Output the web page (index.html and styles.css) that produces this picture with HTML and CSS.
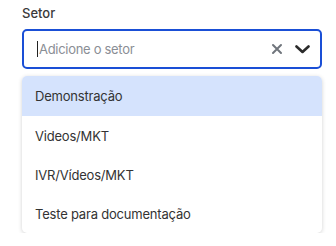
FILE: index.html
```html
<!DOCTYPE html>
<html lang="pt">
<head>
  <meta charset="UTF-8" />
  <title>Setor</title>
  <link rel="stylesheet" href="styles.css">
</head>
<body>
  <div class="field">
    <label class="label">Setor</label>
    <div class="select">
      <span class="caret"></span>
      <span class="placeholder">Adicione o setor</span>
      <span class="icons">
        <svg class="clear" width="12" height="12" viewBox="0 0 12 12"><path d="M2 2 L10 10 M10 2 L2 10" stroke="#70757c" stroke-width="2" stroke-linecap="round"/></svg>
        <svg class="chev" width="15" height="12" viewBox="0 0 15 12"><path d="M1.5 3.5 L7.5 9 L13.5 3.5" fill="none" stroke="#2b2b2b" stroke-width="2.6" stroke-linecap="round" stroke-linejoin="round"/></svg>
      </span>
    </div>
    <ul class="menu">
      <li class="option active">Demonstração</li>
      <li class="option">Videos/MKT</li>
      <li class="option">IVR/Vídeos/MKT</li>
      <li class="option">Teste para documentação</li>
    </ul>
  </div>
</body>
</html>
```

FILE: styles.css
```css
* { margin: 0; padding: 0; box-sizing: border-box; }

body {
  font-family: Inter, "Liberation Sans", sans-serif;
  background: #fff;
  color: #333;
  padding: 5px 14px 0 22px;
}

.field {
  width: 300px;
}

.label {
  display: block;
  font-size: 13px;
  font-weight: 500;
  color: #3a3a3a;
  line-height: 16px;
  margin-bottom: 8px;
}

.select {
  height: 40px;
  border: 2px solid #1a4fd6;
  border-radius: 5px;
  display: flex;
  align-items: center;
  padding: 0 10px 0 13px;
}

.caret {
  width: 1px;
  height: 16px;
  background: #222;
  margin-right: 1px;
}

.placeholder {
  flex: 1;
  font-size: 13px;
  color: #8a8e95;
  letter-spacing: -0.3px;
}

.icons {
  display: flex;
  align-items: center;
  gap: 12px;
}

.menu {
  list-style: none;
  margin-top: 7px;
  border-radius: 5px;
  box-shadow: 0 1px 4px rgba(0, 0, 0, 0.18);
  overflow: hidden;
  background: #fff;
}

.option {
  height: 39px;
  display: flex;
  align-items: center;
  padding-left: 13px;
  font-size: 13px;
  color: #333;
  letter-spacing: -0.2px;
}

.option.active {
  background: #d5e3fd;
  height: 40px;
}
```
